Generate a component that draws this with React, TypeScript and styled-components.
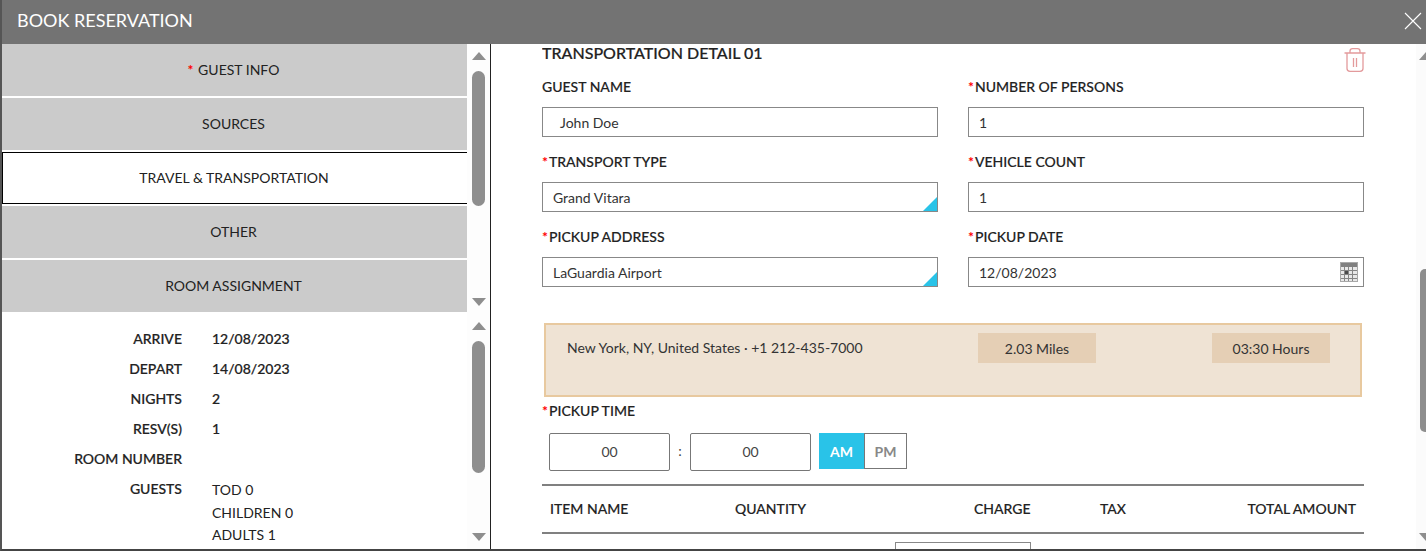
import React from "react";
import styled, { createGlobalStyle } from "styled-components";

const Global = createGlobalStyle`
  html, body { margin: 0; padding: 0; height: 100%; background: #fff; overflow: hidden; }
  * { box-sizing: border-box; }
  body { font-family: Lato, "Liberation Sans", sans-serif; color: #222; }
`;

const Modal = styled.div`
  width: 1426px; height: 551px; display: flex; flex-direction: column;
  background: #fff; border-left: 2px solid #555; border-bottom: 2px solid #444; overflow: hidden;
`;
const Header = styled.header`
  flex: none; height: 44px;
  background: #737373; color: #fff; display: flex; align-items: center; justify-content: space-between;
  padding: 0 0 5px 15px; font-size: 18px;
`;
const Close = styled.svg`
  width: 18px; height: 18px; margin-right: 4px; margin-top: 3px; stroke: #fff; stroke-width: 1.1; fill: none;
`;
const Body = styled.div`
  flex: 1; display: flex; min-height: 0;
`;
const Left = styled.aside`
  width: 489px; flex: none; border-right: 1px solid #222; display: flex; flex-direction: column; min-height: 0;
`;
const NavWrap = styled.div`
  height: 268px; flex: none; display: flex;
`;
const Nav = styled.nav`
  flex: 1; display: flex; flex-direction: column; gap: 2px;
`;
const NavItem = styled.div<{ $active?: boolean }>`
  height: 52px; display: flex; align-items: center; justify-content: center; font-size: 14px; color: #222;
  padding: 0 2px 2px 0;
  background: ${(p) => (p.$active ? "#fff" : "#cbcbcb")};
  ${(p) => p.$active && "border: 1px solid #000; border-right: none;"}
`;
const Track = styled.div<{ $top: number; $bottom: number }>`
  width: 23px; flex: none; background: #fdfdfd; display: flex; flex-direction: column; align-items: center;
  padding: ${(p) => p.$top}px 0 ${(p) => p.$bottom}px;
`;
const Arrow = styled.div<{ $down?: boolean }>`
  width: 0; height: 0; flex: none; border-left: 7px solid transparent; border-right: 7px solid transparent;
  ${(p) => (p.$down ? "border-top: 8px solid #8e8e8e;" : "border-bottom: 8px solid #8e8e8e;")}
`;
const Thumb = styled.div<{ $h: number }>`
  width: 13px; height: ${(p) => p.$h}px; flex: none; background: #8e8e8e; border-radius: 7px; margin-top: 11px; margin-bottom: auto;
`;
const Info = styled.div`
  flex: 1; display: flex; min-height: 0;
`;
const InfoList = styled.div`
  flex: 1; padding-top: 12px; overflow: hidden;
`;
const InfoRow = styled.div`
  display: grid; grid-template-columns: 180px 1fr; column-gap: 30px; min-height: 30px; font-size: 14px; font-weight: 500;
  line-height: 30px; -webkit-text-stroke: 0.2px #222;
`;
const InfoLabel = styled.div`
  text-align: right;
`;
const GuestLines = styled.div`
  line-height: 22.5px; padding-top: 5px; font-weight: 400; -webkit-text-stroke: 0;
`;
const Main = styled.main`
  flex: 1; display: flex; min-width: 0; min-height: 0;
`;
const Content = styled.div`
  width: 873px; margin-left: 51px; flex: none; position: relative; overflow: hidden;
`;
const Title = styled.h2`
  margin: 0; font-size: 16px; font-weight: 500; line-height: 18px; -webkit-text-stroke: 0.2px #222; height: 28px;
`;
const Grid = styled.div`
  display: grid; grid-template-columns: 396px 396px; column-gap: 30px; row-gap: 10px;
`;
const Field = styled.div`
  display: flex; flex-direction: column;
`;
const Label = styled.label`
  font-size: 14px; line-height: 17px; padding-top: 6px; height: 35px; font-weight: 500; -webkit-text-stroke: 0.15px #222; display: block;
`;
const Req = styled.span`
  color: #f00; font-weight: 700; margin-right: 1px; -webkit-text-stroke: 0;
`;
const Input = styled.div<{ $pad?: number; $corner?: boolean }>`
  height: 30px; border: 1px solid #888; background: #fff; font-size: 14px; color: #333; display: flex; align-items: center;
  padding-left: ${(p) => p.$pad ?? 10}px; position: relative;
  ${(p) => p.$corner && `&::after { content: ""; position: absolute; right: 0; bottom: 0; width: 0; height: 0;
    border-left: 14px solid transparent; border-bottom: 14px solid #29c3e8; }`}
`;
const CalIcon = styled.svg`
  position: absolute; right: 5px; top: 4px; width: 18px; height: 20px;
`;
const Trash = styled.svg`
  position: absolute; right: 49px; top: 4px; width: 22px; height: 24px; fill: none; stroke: #e39a9c; stroke-width: 1.3;
`;
const Banner = styled.div`
  margin: 36px 0 0 2px; width: 818px; height: 74px; background: #efe3d4; border: 2px solid #e8c99f;
  display: grid; grid-template-columns: 432px 118px 1fr; font-size: 14px; color: #333; padding-top: 8px;
`;
const BannerText = styled.div`
  padding: 0 0 0 21px; line-height: 30px; height: 30px;
`;
const Chip = styled.div<{ $end?: boolean }>`
  width: 118px; height: 30px; background: #e5cfb5; display: flex; align-items: center; justify-content: center;
  ${(p) => p.$end && "margin-left: 116px;"}
`;
const TimeBlock = styled.div`
  display: flex; flex-direction: column;
`;
const TimeLabel = styled(Label)`
  height: 36px; padding-top: 5px;
`;
const TimeRow = styled.div`
  display: flex; align-items: flex-start; padding-left: 7px; height: 38px;
`;
const TimeBox = styled.div`
  width: 121px; height: 38px; border: 1px solid #777; border-radius: 2px; display: flex; align-items: center; justify-content: center; font-size: 14px; color: #444; padding-bottom: 2px;
`;
const Colon = styled.div`
  width: 20px; text-align: center; line-height: 36px; font-size: 14px; color: #444;
`;
const Toggle = styled.div`
  display: flex; margin-left: 8px; height: 36px;
`;
const Am = styled.div`
  width: 45px; background: #29c3e8; color: #fff; font-size: 14px; font-weight: 700; display: flex; align-items: center; justify-content: center; padding-top: 1px;
`;
const Pm = styled.div`
  width: 43px; border: 1px solid #777; color: #888; font-size: 14px; font-weight: 700; display: flex; align-items: center; justify-content: center; padding-top: 1px;
`;
const Table = styled.div`
  margin-top: 13px; width: 822px;
`;
const Thead = styled.div`
  height: 50px; border-top: 2px solid #808080; border-bottom: 2px solid #808080;
  display: grid; grid-template-columns: 185px 239px 126px 1fr 1fr; align-items: center; padding: 0 8px 2px; font-size: 14px; font-weight: 500; -webkit-text-stroke: 0.15px #222;
`;
const Th = styled.div<{ $right?: boolean }>`
  text-align: ${(p) => (p.$right ? "right" : "left")};
`;
const CellBox = styled.div`
  margin: 8px 0 0 353px; width: 136px; height: 30px; border: 1px solid #888;
`;
const MainTrack = styled.div`
  flex: 1; margin-left: 1px; background: #fbfbfb; position: relative; min-width: 0; overflow: hidden;
`;
const MainArrow = styled(Arrow)<{ $down?: boolean }>`
  position: absolute; left: 3px;
  ${(p) => (p.$down ? "bottom: 8px;" : "top: 8px;")}
`;
const MainThumb = styled.div`
  position: absolute; right: 0; top: 225px; width: 6px; height: 163px; background: #8e8e8e; border-radius: 5px 0 0 5px;
`;

export default function App() {
  return (
    <>
      <Global />
      <Modal>
        <Header>
          BOOK RESERVATION
          <Close viewBox="0 0 18 18"><path d="M1 1 L17 17 M17 1 L1 17" /></Close>
        </Header>
        <Body>
          <Left>
            <NavWrap>
              <Nav>
                <NavItem><Req>*</Req>&nbsp;GUEST INFO</NavItem>
                <NavItem>SOURCES</NavItem>
                <NavItem $active>TRAVEL &amp; TRANSPORTATION</NavItem>
                <NavItem>OTHER</NavItem>
                <NavItem>ROOM ASSIGNMENT</NavItem>
              </Nav>
              <Track $top={8} $bottom={6}>
                <Arrow />
                <Thumb $h={135} />
                <Arrow $down />
              </Track>
            </NavWrap>
            <Info>
              <InfoList>
                <InfoRow><InfoLabel>ARRIVE</InfoLabel><div>12/08/2023</div></InfoRow>
                <InfoRow><InfoLabel>DEPART</InfoLabel><div>14/08/2023</div></InfoRow>
                <InfoRow><InfoLabel>NIGHTS</InfoLabel><div>2</div></InfoRow>
                <InfoRow><InfoLabel>RESV(S)</InfoLabel><div>1</div></InfoRow>
                <InfoRow><InfoLabel>ROOM NUMBER</InfoLabel><div /></InfoRow>
                <InfoRow>
                  <InfoLabel>GUESTS</InfoLabel>
                  <GuestLines>TOD 0<br />CHILDREN 0<br />ADULTS 1</GuestLines>
                </InfoRow>
              </InfoList>
              <Track $top={10} $bottom={8}>
                <Arrow />
                <Thumb $h={132} />
                <Arrow $down />
              </Track>
            </Info>
          </Left>
          <Main>
            <Content>
              <Title>TRANSPORTATION DETAIL 01</Title>
              <Trash viewBox="0 0 22 24">
                <path d="M0.5 5 H21.5 M3 5 V20.5 Q3 23.3 6 23.3 H16 Q19 23.3 19 20.5 V5 M6 5 V3 Q6 0.7 8.5 0.7 H13.5 Q16 0.7 16 3 V5 M9.5 10 V19 M12.5 10 V19" />
              </Trash>
              <Grid>
                <Field><Label>GUEST NAME</Label><Input $pad={17}>John Doe</Input></Field>
                <Field><Label><Req>*</Req>NUMBER OF PERSONS</Label><Input>1</Input></Field>
                <Field><Label><Req>*</Req>TRANSPORT TYPE</Label><Input $corner>Grand Vitara</Input></Field>
                <Field><Label><Req>*</Req>VEHICLE COUNT</Label><Input>1</Input></Field>
                <Field><Label><Req>*</Req>PICKUP ADDRESS</Label><Input $corner>LaGuardia Airport</Input></Field>
                <Field>
                  <Label><Req>*</Req>PICKUP DATE</Label>
                  <Input>
                    12/08/2023
                    <CalIcon viewBox="0 0 18 20">
                      <rect x="0.5" y="0.5" width="17" height="19" fill="#e8e8e8" stroke="#a8a8a8" />
                      <rect x="1" y="1" width="16" height="4" fill="#808080" />
                      <path d="M1 8.5 H17 M1 12.5 H17 M1 16.5 H17 M4.5 5 V19 M8.5 5 V19 M12.5 5 V19" stroke="#858585" />
                      <rect x="5" y="9" width="3" height="3" fill="#4a4a4a" />
                    </CalIcon>
                  </Input>
                </Field>
              </Grid>
              <Banner>
                <BannerText>New York, NY, United States · +1 212-435-7000</BannerText>
                <Chip>2.03 Miles</Chip>
                <Chip $end>03:30 Hours</Chip>
              </Banner>
              <TimeBlock>
                <TimeLabel><Req>*</Req>PICKUP TIME</TimeLabel>
                <TimeRow>
                  <TimeBox>00</TimeBox>
                  <Colon>:</Colon>
                  <TimeBox>00</TimeBox>
                  <Toggle><Am>AM</Am><Pm>PM</Pm></Toggle>
                </TimeRow>
              </TimeBlock>
              <Table>
                <Thead>
                  <Th>ITEM NAME</Th>
                  <Th>QUANTITY</Th>
                  <Th>CHARGE</Th>
                  <Th>TAX</Th>
                  <Th $right>TOTAL AMOUNT</Th>
                </Thead>
                <CellBox />
              </Table>
            </Content>
            <MainTrack>
              <MainArrow />
              <MainThumb />
              <MainArrow $down />
            </MainTrack>
          </Main>
        </Body>
      </Modal>
    </>
  );
}
